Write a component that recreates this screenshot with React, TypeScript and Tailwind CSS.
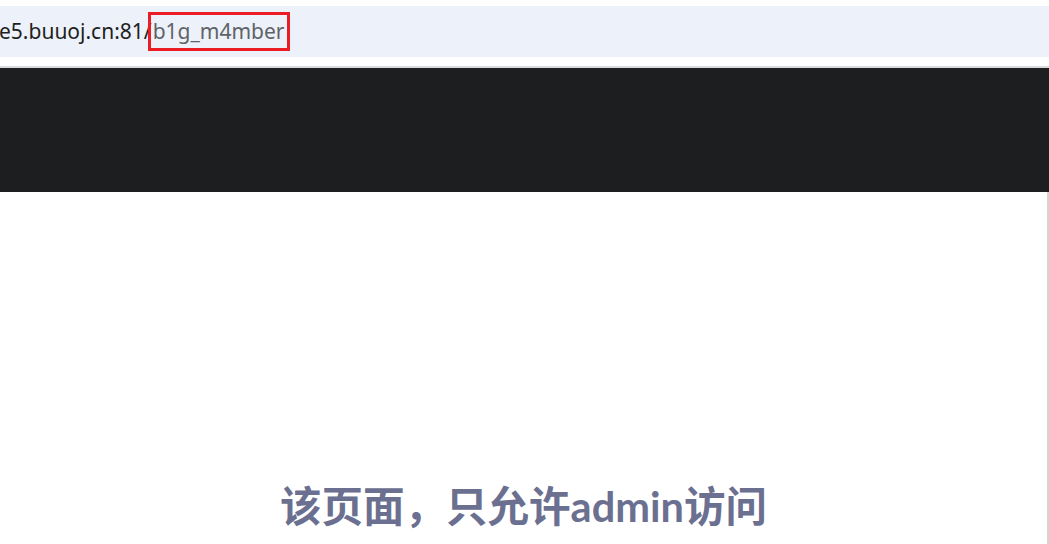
export default function App() {
  return (
    <div className="flex h-[544px] w-[1049px] flex-col overflow-hidden bg-white">
      <div className="h-[6px] bg-white" />
      <div className="flex h-[51px] items-center bg-[#edf1f9] font-['Noto_Sans',sans-serif] text-[21px]">
        <span className="ml-[-1px] text-[#1f1f1f]">e5.buuoj.cn:81/</span>
        <span className="ml-[-4px] border-[3px] border-[#ec1c24] px-[2px] leading-[33px] text-[#5f6368]">
          b1g_m4mber
        </span>
      </div>
      <div className="h-[9px] bg-white" />
      <div className="h-[2px] bg-[#dadada]" />
      <div className="h-[124px] bg-[#1d1e20]" />
      <div className="flex flex-1 border-r-2 border-[#d4d4d4]">
        <h1 className="mt-[294px] w-full text-center font-['Lato','Noto_Sans_CJK_SC',sans-serif] text-[41.5px] font-bold leading-none text-[#6b7091]">
          该页面，只允许admin访问
        </h1>
      </div>
    </div>
  );
}
